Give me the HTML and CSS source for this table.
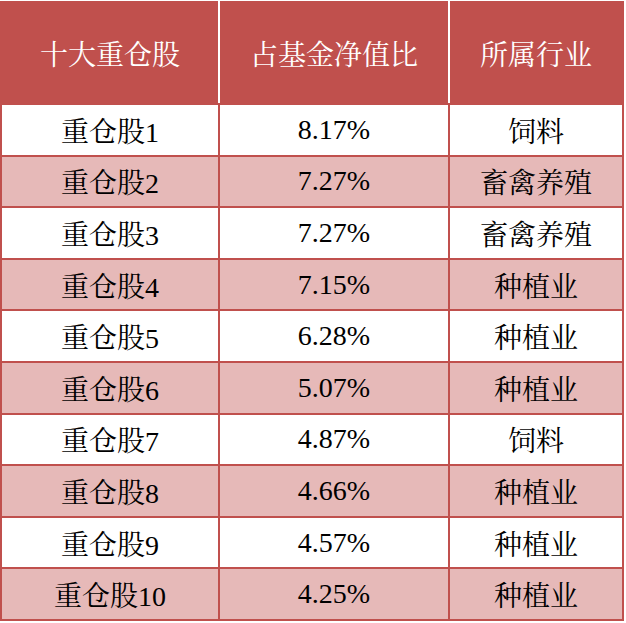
FILE: index.html
```html
<!DOCTYPE html>
<html>
<head>
<meta charset="utf-8">
<link rel="stylesheet" href="styles.css">
</head>
<body>
<table class="holdings">
  <thead>
    <tr><th>十大重仓股</th><th>占基金净值比</th><th>所属行业</th></tr>
  </thead>
  <tbody>
    <tr><td>重仓股1</td><td>8.17%</td><td>饲料</td></tr>
    <tr class="alt"><td>重仓股2</td><td>7.27%</td><td>畜禽养殖</td></tr>
    <tr><td>重仓股3</td><td>7.27%</td><td>畜禽养殖</td></tr>
    <tr class="alt"><td>重仓股4</td><td>7.15%</td><td>种植业</td></tr>
    <tr><td>重仓股5</td><td>6.28%</td><td>种植业</td></tr>
    <tr class="alt"><td>重仓股6</td><td>5.07%</td><td>种植业</td></tr>
    <tr><td>重仓股7</td><td>4.87%</td><td>饲料</td></tr>
    <tr class="alt"><td>重仓股8</td><td>4.66%</td><td>种植业</td></tr>
    <tr><td>重仓股9</td><td>4.57%</td><td>种植业</td></tr>
    <tr class="alt"><td>重仓股10</td><td>4.25%</td><td>种植业</td></tr>
  </tbody>
</table>
</body>
</html>
```
FILE: styles.css
```css
html, body {
  margin: 0;
  padding: 0;
  background: #ffffff;
}
.holdings {
  margin-top: 1px;
  width: 624px;
  border-collapse: collapse;
  table-layout: fixed;
  font-family: "Liberation Serif", "Noto Serif CJK SC", "Noto Sans CJK SC", serif;
  color: #000;
}
.holdings th:nth-child(1) { width: 216px; }
.holdings th:nth-child(2) { width: 228px; }
.holdings th {
  height: 100px;
  padding: 0;
  background: #c0504d;
  color: #ffffff;
  font-weight: normal;
  font-size: 28px;
  border: 2px solid #c0504d;
  border-right: 2px solid #ffffff;
}
.holdings th:last-child {
  border-right-color: #c0504d;
}
.holdings td {
  height: 49.6px;
  padding: 0;
  text-align: center;
  font-size: 28px;
  border: 2px solid #c0504d;
}
.holdings tr.alt td {
  background: #e6b9b8;
}
```
